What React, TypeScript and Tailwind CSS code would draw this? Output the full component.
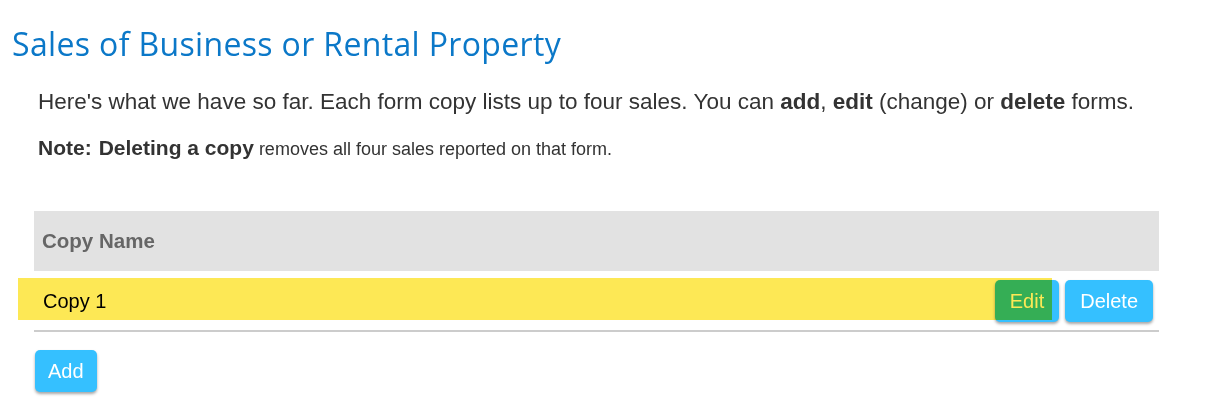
const copies = [{ name: "Copy 1" }];

const btn =
  "h-[42px] rounded-[5px] bg-[#35c0ff] text-[20px] text-white shadow-[0_2px_3px_rgba(0,0,0,0.35)]";

export default function App() {
  return (
    <div className="min-h-screen bg-white pl-[10px] font-['Liberation_Sans',Arial,sans-serif] text-[#333]">
      {/* Title */}
      <h1 className="pl-[2px] pt-[24px] font-['Open_Sans',sans-serif] text-[32px] leading-[40px] tracking-[0.35px] text-[#0b78c8]">
        Sales of Business or Rental Property
      </h1>

      <div className="pl-[24px] pr-[68px]">
        <p className="mt-[25px] pl-[4px] text-[22.5px] leading-[26px]">
          Here's what we have so far. Each form copy lists up to four sales. You can{" "}
          <b>add</b>, <b>edit</b> (change) or <b>delete</b> forms.
        </p>

        <p className="mt-[21px] pl-[4px] text-[18px] leading-[24px]">
          <b className="text-[21px]">Note:</b>
          <b className="ml-[7px] text-[21px]">Deleting a copy</b> removes all four sales reported on that form.
        </p>

        {/* Table */}
        <div className="mt-[50px]">
          <div className="flex h-[60px] items-center bg-[#e2e2e2] px-[8px] text-[20.5px] font-bold text-[#666]">
            Copy Name
          </div>

          {copies.map((c) => (
            <div
              key={c.name}
              className="relative flex items-center justify-between border-b-2 border-[#cccccc] pt-[9px] pb-[8px] pl-[9px] pr-[6px]"
            >
              <span className="text-[20px] text-black">{c.name}</span>
              <div className="flex gap-[6px]">
                <button className={`${btn} px-[15px]`}>Edit</button>
                <button className={`${btn} px-[15px]`}>Delete</button>
              </div>
              {/* highlight */}
              <div className="pointer-events-none absolute left-[-16px] top-[7px] h-[42px] w-[1034px] bg-[#fde855] mix-blend-multiply" />
            </div>
          ))}

          <button className={`${btn} mt-[18px] ml-[1px] px-[13px]`}>Add</button>
        </div>
      </div>
    </div>
  );
}
